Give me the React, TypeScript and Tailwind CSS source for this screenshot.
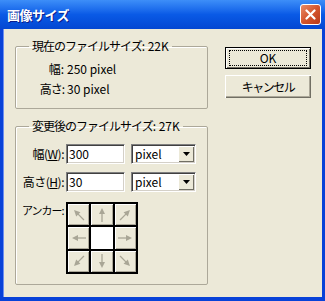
import React from "react";

const jp = { fontFamily: '"Noto Sans CJK JP", "Noto Sans", sans-serif' };

function Arrow({ angle }: { angle: number }) {
  return (
    <svg width="20" height="20" viewBox="0 0 20 20">
      <g transform={`rotate(${angle} 10 10)`} fill="#a9a696" stroke="#a9a696">
        <line x1="10" y1="17" x2="10" y2="7" strokeWidth="1.3" />
        <polygon points="10,3 7,9 13,9" stroke="none" />
      </g>
    </svg>
  );
}

function Cell({ angle, center }: { angle?: number; center?: boolean }) {
  if (center) return <div className="bg-white" />;
  return (
    <div className="flex items-center justify-center bg-[#ece9d8] shadow-[inset_1px_1px_0_#ffffff,inset_-1px_-1px_0_#aca899]">
      {angle !== undefined && <Arrow angle={angle} />}
    </div>
  );
}

function Select() {
  return (
    <div className="flex h-[20px] w-[65px] items-center border border-t-[#7f7f7f] border-l-[#7f7f7f] border-b-white border-r-white bg-white shadow-[inset_1px_1px_0_#404040,inset_-1px_-1px_0_#d4d0c8]">
      <span className="flex-1 pl-[3px] text-[12px] leading-[14px]">pixel</span>
      <div className="mr-[1px] flex h-[16px] w-[16px] items-center justify-center bg-[#ece9d8] shadow-[inset_1px_1px_0_#ffffff,inset_-1px_-1px_0_#716f64]">
        <svg width="7" height="4" viewBox="0 0 7 4">
          <polygon points="0,0 7,0 3.5,4" fill="#000" />
        </svg>
      </div>
    </div>
  );
}

function Field({ value }: { value: string }) {
  return (
    <div className="flex h-[20px] w-[59px] items-center border border-t-[#7f7f7f] border-l-[#7f7f7f] border-b-white border-r-white bg-white pl-[2px] text-[12px] leading-[14px] shadow-[inset_1px_1px_0_#404040,inset_-1px_-1px_0_#d4d0c8]">
      {value}
    </div>
  );
}

export default function App() {
  return (
    <div className="flex h-[301px] w-[325px] flex-col bg-[#0842d8] text-black" style={jp}>
      {/* Title bar */}
      <div className="flex h-[29px] items-center justify-between bg-gradient-to-b from-[#3d8ef8] via-[#0a5ae6] to-[#0447d2] pl-[7px] pr-[4px]">
        <span className="text-[13px] font-bold tracking-[-0.5px] text-white [text-shadow:1px_1px_0_#0a1e8c]">画像サイズ</span>
        <div className="flex h-[21px] w-[21px] items-center justify-center rounded-[3px] border border-white bg-gradient-to-br from-[#e88b66] via-[#d4552d] to-[#b8381a]">
          <svg width="11" height="11" viewBox="0 0 11 11">
            <path d="M1.5 1.5 L9.5 9.5 M9.5 1.5 L1.5 9.5" stroke="#fff" strokeWidth="2.2" strokeLinecap="round" />
          </svg>
        </div>
      </div>

      {/* Client area */}
      <div className="mx-[3px] mb-[4px] flex flex-1 bg-[#ece9d8] pl-[12px] pt-[10px] shadow-[inset_1px_0_0_#6c8ef0]">
        <div className="flex w-[193px] flex-col">
          <fieldset className="h-[70px] rounded-[2px] border border-[#aca899] shadow-[inset_1px_1px_0_#ffffff]">
            <legend className="ml-[13px] px-[3px] text-[12px] leading-[14px]">
              <span className="tracking-[-1px]">現在のファイルサイズ</span>: 22K
            </legend>
            <div className="mt-[9px] flex flex-col gap-[6px] text-[12px] leading-[14px]">
              <div className="flex">
                <span className="w-[48px] text-right">幅:</span>
                <span className="pl-[3px]">250 pixel</span>
              </div>
              <div className="flex">
                <span className="w-[48px] text-right tracking-[-1px]">高さ:</span>
                <span className="pl-[3px]">30 pixel</span>
              </div>
            </div>
          </fieldset>

          <fieldset className="mt-[10px] h-[166px] rounded-[2px] border border-[#aca899] shadow-[inset_1px_1px_0_#ffffff]">
            <legend className="ml-[13px] px-[3px] text-[12px] leading-[14px]">
              <span className="tracking-[-1px]">変更後のファイルサイズ</span>: 27K
            </legend>
            <div className="mt-[11px] flex flex-col gap-[8px] text-[12px] leading-[14px]">
              <div className="flex items-center">
                <span className="w-[48px] text-right tracking-[-0.5px]">
                  幅(<span className="underline">W</span>):
                </span>
                <div className="ml-[2px]">
                  <Field value="300" />
                </div>
                <div className="ml-[6px]">
                  <Select />
                </div>
              </div>
              <div className="flex items-center">
                <span className="w-[48px] text-right tracking-[-0.5px]">
                  高さ(<span className="underline">H</span>):
                </span>
                <div className="ml-[2px]">
                  <Field value="30" />
                </div>
                <div className="ml-[6px]">
                  <Select />
                </div>
              </div>
              <div className="mt-[2px] flex items-start">
                <span className="w-[50px] whitespace-nowrap pl-[6px] pt-[1px] text-[11px] tracking-[-1px]">アンカー:</span>
                <div className="grid h-[72px] w-[72px] grid-cols-3 grid-rows-3 gap-[2px] bg-black p-[2px]">
                  <Cell angle={-45} />
                  <Cell angle={0} />
                  <Cell angle={45} />
                  <Cell angle={-90} />
                  <Cell center />
                  <Cell angle={90} />
                  <Cell angle={-135} />
                  <Cell angle={180} />
                  <Cell angle={135} />
                </div>
              </div>
            </div>
          </fieldset>
        </div>

        {/* Buttons */}
        <div className="ml-[17px] flex flex-col gap-[6px] pt-[8px] text-[12px]">
          <div className="flex h-[22px] w-[86px] items-center justify-center border border-black bg-[#ece9d8] shadow-[inset_1px_1px_0_#ffffff,inset_-1px_-1px_0_#716f64]">
            <div className="flex h-[16px] w-[78px] items-center justify-center border border-dotted border-black leading-[14px]">
              OK
            </div>
          </div>
          <div className="flex h-[23px] w-[86px] items-center justify-center bg-[#ece9d8] leading-[14px] tracking-[-1.5px] shadow-[inset_1px_1px_0_#ffffff,inset_-1px_-1px_0_#716f64,inset_-2px_-2px_0_#aca899]">
            キャンセル
          </div>
        </div>
      </div>
    </div>
  );
}
